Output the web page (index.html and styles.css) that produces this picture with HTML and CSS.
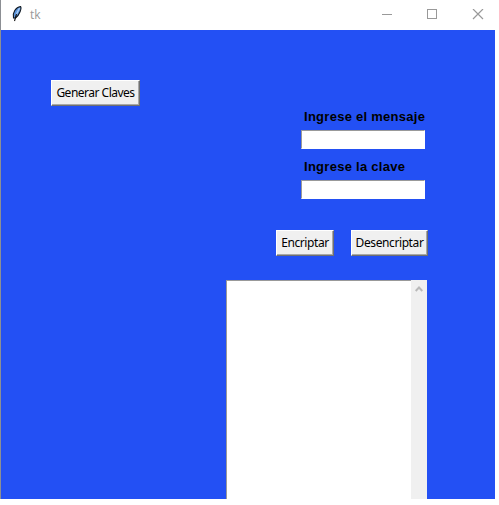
FILE: index.html
```html
<!DOCTYPE html>
<html lang="es">
<head>
<meta charset="utf-8">
<title>tk</title>
<link rel="stylesheet" href="styles.css">
</head>
<body>
<main class="window">
  <header class="titlebar">
    <svg class="feather" width="12" height="18" viewBox="0 0 12 18">
      <path d="M2.500 13C1 8 5 2 9.500 1.500C11 3 8.500 10 4.500 13Z" fill="#5b94dc" stroke="#101820" stroke-width="1.100"/>
      <path d="M8.500 3L5 10" stroke="#a9ccf5" stroke-width="1.300"/>
      <path d="M5.500 9L3.500 16" stroke="#101010" stroke-width="1.100"/>
    </svg>
    <span class="title">tk</span>
    <svg class="controls" width="103" height="12" viewBox="0 0 103 12" fill="none" stroke="#999" shape-rendering="crispEdges">
      <path d="M1 5.500H11M46.500 .500H55.500V9.500H46.500Z"/>
      <path d="M92 0L102 10M102 0L92 10" shape-rendering="auto" stroke-width="1.200"/>
    </svg>
  </header>
  <section class="content">
    <button class="btn generate"><span>Generar Claves</span></button>
    <form class="form">
      <label class="label message" for="message">Ingrese el mensaje</label>
      <input class="entry" id="message">
      <label class="label key" for="key">Ingrese la clave</label>
      <input class="entry" id="key">
    </form>
    <div class="actions">
      <button class="btn encrypt"><span>Encriptar</span></button>
      <button class="btn decrypt"><span>Desencriptar</span></button>
    </div>
    <div class="output">
      <div class="text"></div>
      <div class="scrollbar">
        <svg width="8" height="6" viewBox="0 0 8 6"><path d="M.700 5L4 1.500L7.300 5" fill="none" stroke="#b9b9b9" stroke-width="1.900"/></svg>
      </div>
    </div>
  </section>
</main>
</body>
</html>
```
FILE: styles.css
```css
* { box-sizing: border-box; }
body { margin: 0; background: #fff; overflow: hidden; }
.window {
  width: 495px;
  height: 499px;
  border-left: 1px solid #8c8f94;
  display: flex;
  flex-direction: column;
}
.titlebar {
  height: 30px;
  flex: none;
  display: flex;
  align-items: flex-start;
  background: #fff;
}
.feather { margin: 5px 0 0 10px; }
.title {
  margin: 7px 0 0 7px;
  font: 12px/16px "Open Sans", sans-serif;
  color: #999;
}
.controls { margin: 9px 11px 0 auto; }
.content {
  flex: 1;
  min-height: 0;
  background: #2350f4;
  padding-top: 50px;
  display: flex;
  flex-direction: column;
  overflow: hidden;
}
.btn {
  height: 26px;
  flex: none;
  margin-bottom: -1px;
  padding: 0;
  background: #f0f0f0;
  border: 1px solid;
  border-color: #fff #707070 #707070 #fff;
  box-shadow: inset -1px -1px #a8a8a8;
  border-radius: 0;
  color: #000;
  font: 12px/20px "Noto Sans", sans-serif;
  white-space: nowrap;
}
.btn span { display: block; margin: 0 -4px; }
.generate { width: 89px; margin-left: 50px; letter-spacing: -0.5px; }
.form {
  width: 124px;
  margin: 0 0 0 300px;
  display: flex;
  flex-direction: column;
}
.label {
  height: 25px;
  padding-left: 3px;
  font: bold 13px/24px "Liberation Sans", sans-serif;
  letter-spacing: 0.27px;
  color: #000;
  white-space: nowrap;
}
.key { height: 31px; line-height: 35px; }
.entry {
  width: 124px;
  height: 19px;
  padding: 0;
  background: #fff;
  border: solid;
  border-width: 1px;
  border-color: #999 #fff #fff #999;
  border-radius: 0;
}
.actions { display: flex; margin: 31px 0 25px 275px; gap: 17px; }
.encrypt { width: 58px; letter-spacing: -0.4px; }
.decrypt { width: 77px; letter-spacing: -0.4px; }
.output { flex: 1; width: 201px; margin-left: 225px; display: flex; }
.text {
  width: 185px;
  background: #fff;
  border: solid #999;
  border-width: 1px 0 0 1px;
}
.scrollbar { width: 16px; background: #f0f0f0; display: flex; justify-content: center; align-items: flex-start; padding-top: 6px; }
```
